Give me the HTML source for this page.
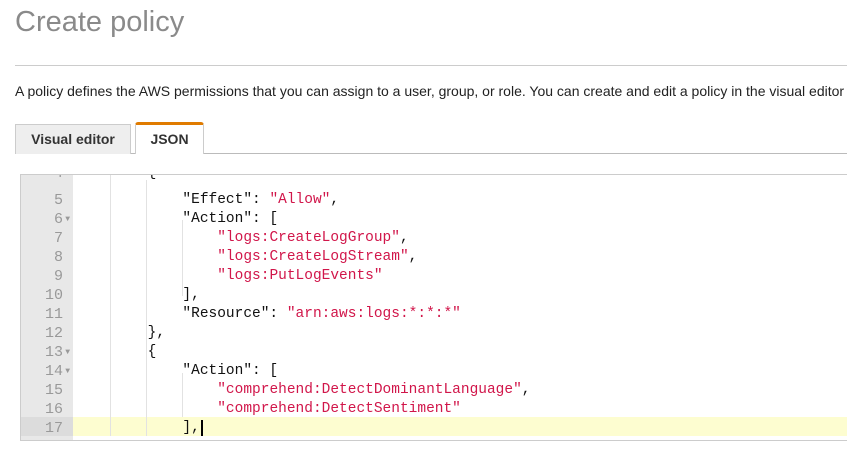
<!DOCTYPE html>
<html><head><style>
body{margin:0;width:847px;height:463px;overflow:hidden;background:#fff;font-family:"Liberation Sans",sans-serif;position:relative}
.t{position:absolute;left:15px;top:6px;font-size:29px;color:#8a8a8a}
.hr{position:absolute;left:15px;right:0;top:65px;border-top:1px solid #ccc}
.p{position:absolute;left:15px;top:83px;font-size:14px;color:#222;white-space:nowrap}
.tabline{position:absolute;left:15px;right:0;top:153px;border-top:1px solid #bbb}
.tab{position:absolute;font-weight:bold;font-size:14px;color:#333;text-align:center;box-sizing:border-box}
.ed{position:absolute;left:20px;top:174px;width:900px;height:265px;border:1px solid #ccc;border-right:none;overflow:hidden;background:#fff}
.g{position:absolute;left:0;top:0;width:52px;height:100%;background:#e8e8e8}
.ln{position:absolute;left:0;width:52px;height:19px;box-sizing:border-box;padding-right:10px;text-align:right;color:#999;font:15px/19px "Liberation Mono",monospace;margin-top:2px}
.ln i{font-style:normal;font-size:8px;position:absolute;right:3px;top:0}
.cl{position:absolute;left:57px;height:19px;white-space:pre;font:14.5px/19px "Liberation Mono",monospace;color:#111;margin-top:2px}
.s{color:#d1164a}
.gd{position:absolute;width:1px;background:#e2e2e2}
</style></head><body>
<div class="t">Create policy</div>
<div class="hr"></div>
<div class="p">A policy defines the AWS permissions that you can assign to a user, group, or role. You can create and edit a policy in the visual editor</div>
<div class="tabline"></div>
<div class="tab" style="left:15px;top:124px;width:116px;height:30px;background:#eee;border:1px solid #ccc;border-bottom:none;line-height:28px">Visual editor</div>
<div class="tab" style="left:135px;top:122px;width:69px;height:32px;background:#fff;border:1px solid #ccc;border-top:3px solid #e07b00;border-bottom:none;border-radius:3px 3px 0 0;line-height:28px">JSON</div>
<div class="ed">
<div class="g"></div>
<div style="position:absolute;left:0;top:242px;width:100%;height:19px;background:#fdfdd0"></div>
<div style="position:absolute;left:0;top:242px;width:52px;height:19px;background:#dcdcdc"></div>
<div class="gd" style="left:89px;top:0;height:261px"></div>
<div class="gd" style="left:125px;top:5px;height:256px"></div>
<div class="gd" style="left:161px;top:45px;height:76px"></div>
<div class="gd" style="left:161px;top:198px;height:44px"></div>
<div class="ln" style="top:-13px">4</div><div class="cl" style="top:-13px">        {</div>
<div class="ln" style="top:14px">5</div><div class="cl" style="top:14px">            "Effect": <span class="s">"Allow"</span>,</div>
<div class="ln" style="top:33px">6<i>▼</i></div><div class="cl" style="top:33px">            "Action": [</div>
<div class="ln" style="top:52px">7</div><div class="cl" style="top:52px">                <span class="s">"logs:CreateLogGroup"</span>,</div>
<div class="ln" style="top:71px">8</div><div class="cl" style="top:71px">                <span class="s">"logs:CreateLogStream"</span>,</div>
<div class="ln" style="top:90px">9</div><div class="cl" style="top:90px">                <span class="s">"logs:PutLogEvents"</span></div>
<div class="ln" style="top:109px">10</div><div class="cl" style="top:109px">            ],</div>
<div class="ln" style="top:128px">11</div><div class="cl" style="top:128px">            "Resource": <span class="s">"arn:aws:logs:*:*:*"</span></div>
<div class="ln" style="top:147px">12</div><div class="cl" style="top:147px">        },</div>
<div class="ln" style="top:166px">13<i>▼</i></div><div class="cl" style="top:166px">        {</div>
<div class="ln" style="top:185px">14<i>▼</i></div><div class="cl" style="top:185px">            "Action": [</div>
<div class="ln" style="top:204px">15</div><div class="cl" style="top:204px">                <span class="s">"comprehend:DetectDominantLanguage"</span>,</div>
<div class="ln" style="top:223px">16</div><div class="cl" style="top:223px">                <span class="s">"comprehend:DetectSentiment"</span></div>
<div class="ln" style="top:242px">17</div><div class="cl" style="top:242px">            ],<span style="border-left:2px solid #000;margin-left:1px"></span></div>
</div>
</body></html>
